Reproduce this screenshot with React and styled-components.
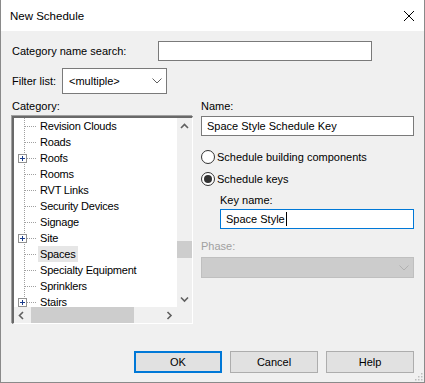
import React from 'react';
import styled, { createGlobalStyle } from 'styled-components';

const GlobalStyle = createGlobalStyle`
  html, body {
    margin: 0;
    padding: 0;
    background: #ffffff;
  }
  body {
    font-family: "Liberation Sans", Arial, sans-serif;
    font-size: 11px;
    color: #000;
  }
`;

const Window = styled.div`
  width: 425px;
  height: 383px;
  box-sizing: border-box;
  border: 1px solid #8a8a8a;
  border-top: none;
  background: #f0f0f0;
  display: flex;
  flex-direction: column;
  position: relative;
  overflow: hidden;
`;

const TitleBar = styled.div`
  height: 31px;
  background: #fff;
  display: flex;
  align-items: center;
  justify-content: space-between;
  padding: 0 9px 0 9px;
  font-size: 11.5px;
`;

const CloseIcon = styled.svg`
  width: 12px;
  height: 12px;
`;

const Body = styled.div`
  flex: 1;
  padding: 10px 10px 0 11px;
  display: flex;
  flex-direction: column;
`;

const Row = styled.div`
  display: flex;
  align-items: center;
  height: ${(p) => p.h}px;
  margin-bottom: ${(p) => p.mb || 0}px;
`;

const Label = styled.div`
  width: ${(p) => (p.w ? `${p.w}px` : 'auto')};
  color: ${(p) => (p.disabled ? '#a0a0a0' : '#000')};
  padding-left: ${(p) => p.indent || 0}px;
  height: 14px;
  line-height: 14px;
  margin-top: ${(p) => p.mt || 0}px;
  margin-bottom: ${(p) => p.mb || 0}px;
`;

const TextInput = styled.div`
  box-sizing: border-box;
  width: ${(p) => p.w}px;
  height: ${(p) => p.h || 20}px;
  background: #fff;
  border: 1px solid ${(p) => (p.focused ? '#0078d7' : '#7a7a7a')};
  padding: 0 5px;
  display: flex;
  align-items: center;
  margin-left: ${(p) => p.ml || 0}px;
  margin-top: ${(p) => p.mt || 0}px;
`;

const Caret = styled.span`
  display: inline-block;
  width: 1px;
  height: 14px;
  background: #000;
  margin-left: 1px;
`;

const Combo = styled.div`
  box-sizing: border-box;
  width: ${(p) => p.w}px;
  height: ${(p) => p.h}px;
  background: ${(p) => (p.disabled ? '#cccccc' : '#fff')};
  border: 1px solid ${(p) => (p.disabled ? '#bfbfbf' : '#7a7a7a')};
  display: flex;
  align-items: center;
  justify-content: space-between;
  padding: 0 4px 0 6px;
`;

const Chevron = ({ color = '#606060' }) => (
  <svg width="10" height="6" viewBox="0 0 10 6">
    <path d="M0.5 0.5 L5 5 L9.5 0.5" fill="none" stroke={color} strokeWidth="1" />
  </svg>
);

const Columns = styled.div`
  display: flex;
  gap: 8px;
  margin-top: 5px;
`;

const LeftCol = styled.div`
  width: 181px;
  display: flex;
  flex-direction: column;
`;

const RightCol = styled.div`
  width: 213px;
  display: flex;
  flex-direction: column;
`;

const TreeBox = styled.div`
  box-sizing: border-box;
  height: 208px;
  border-style: solid;
  border-width: 2px 1px 1px 2px;
  border-color: #696969 #fff #fff #696969;
  box-shadow: -1px -1px 0 #a0a0a0;
  background: #fff;
  display: grid;
  grid-template-columns: 1fr 15px;
  grid-template-rows: 1fr 16px;
  margin-top: 3px;
`;

const TreeList = styled.div`
  overflow: hidden;
  position: relative;
`;

const TreeRow = styled.div`
  height: 16px;
  display: flex;
  align-items: center;
  position: relative;
  letter-spacing: -0.2px;
`;

const Dots = styled.div`
  position: absolute;
  left: ${(p) => p.left}px;
  top: ${(p) => p.top}px;
  width: ${(p) => p.w || 1}px;
  height: ${(p) => p.h || 1}px;
  background-image: ${(p) =>
    p.vertical
      ? 'linear-gradient(to bottom, #a0a0a0 50%, transparent 50%)'
      : 'linear-gradient(to right, #a0a0a0 50%, transparent 50%)'};
  background-size: ${(p) => (p.vertical ? '1px 2px' : '2px 1px')};
`;

const Expander = styled.div`
  position: absolute;
  left: 4px;
  top: 4px;
  width: 9px;
  height: 9px;
  box-sizing: border-box;
  border: 1px solid #919191;
  background: #fff;
  display: flex;
  align-items: center;
  justify-content: center;
  z-index: 1;
`;

const ItemText = styled.span`
  margin-left: 24px;
  padding: 1px 2px;
  background: ${(p) => (p.selected ? '#e6e6e6' : 'transparent')};
  line-height: 14px;
  white-space: nowrap;
`;

const VScroll = styled.div`
  background: #f0f0f0;
  display: flex;
  flex-direction: column;
  align-items: center;
  position: relative;
`;

const HScroll = styled.div`
  background: #f0f0f0;
  display: flex;
  align-items: center;
  position: relative;
`;

const ScrollArrow = styled.div`
  width: 15px;
  height: 16px;
  display: flex;
  align-items: center;
  justify-content: center;
`;

const Spacer = styled.div`
  flex: 1;
`;

const VThumb = styled.div`
  position: absolute;
  left: 0;
  right: 0;
  top: ${(p) => p.top}px;
  height: ${(p) => p.h}px;
  background: #cdcdcd;
`;

const HThumb = styled.div`
  position: absolute;
  top: 0;
  bottom: 0;
  left: ${(p) => p.left}px;
  width: ${(p) => p.w}px;
  background: #cdcdcd;
`;

const Corner = styled.div`
  background: #f0f0f0;
`;

const RadioRow = styled.div`
  display: flex;
  align-items: center;
  height: 16px;
  margin-top: ${(p) => p.mt || 0}px;
  margin-bottom: ${(p) => p.mb || 0}px;
`;

const RadioCircle = styled.div`
  box-sizing: border-box;
  width: 14px;
  height: 14px;
  border-radius: 50%;
  border: 1px solid #333;
  background: #fff;
  display: flex;
  align-items: center;
  justify-content: center;
  margin-right: 2px;
`;

const RadioDot = styled.div`
  width: 8px;
  height: 8px;
  border-radius: 50%;
  background: #333;
`;

const Footer = styled.div`
  display: flex;
  justify-content: flex-end;
  gap: 8px;
  margin-top: auto;
  padding: 0 0 9px 0;
`;

const Button = styled.div`
  box-sizing: border-box;
  width: 88px;
  height: 22px;
  background: #e1e1e1;
  border: ${(p) => (p.primary ? '2px solid #0078d7' : '1px solid #adadad')};
  display: flex;
  align-items: center;
  justify-content: center;
`;

const Grip = styled.svg`
  position: absolute;
  right: 1px;
  bottom: 1px;
`;

const items = [
  { name: 'Revision Clouds' },
  { name: 'Roads' },
  { name: 'Roofs', plus: true },
  { name: 'Rooms' },
  { name: 'RVT Links' },
  { name: 'Security Devices' },
  { name: 'Signage' },
  { name: 'Site', plus: true },
  { name: 'Spaces', selected: true },
  { name: 'Specialty Equipment' },
  { name: 'Sprinklers' },
  { name: 'Stairs', plus: true },
];

const Plus = () => (
  <svg width="7" height="7" viewBox="0 0 7 7">
    <path d="M1 3.5 H6 M3.5 1 V6" stroke="#1a3c8c" strokeWidth="1" shapeRendering="crispEdges" />
  </svg>
);

const Arrow = ({ dir }) => {
  const paths = {
    up: 'M1 5 L4.5 1.5 L8 5',
    down: 'M1 1.5 L4.5 5 L8 1.5',
    left: 'M5 1 L1.5 4.5 L5 8',
    right: 'M1.5 1 L5 4.5 L1.5 8',
  };
  const vertical = dir === 'up' || dir === 'down';
  return (
    <svg width={vertical ? 9 : 7} height={vertical ? 7 : 9} viewBox={vertical ? '0 0 9 7' : '0 0 7 9'}>
      <path d={paths[dir]} fill="none" stroke="#606060" strokeWidth="1.6" />
    </svg>
  );
};

export default function App() {
  return (
    <>
      <GlobalStyle />
      <Window>
        <TitleBar>
          <span>New Schedule</span>
          <CloseIcon viewBox="0 0 12 12">
            <path d="M1 1 L11 11 M11 1 L1 11" stroke="#000" strokeWidth="1" />
          </CloseIcon>
        </TitleBar>
        <Body>
          <Row h={20} mb={7}>
            <Label w={146}>Category name search:</Label>
            <TextInput w={214} />
          </Row>
          <Row h={26}>
            <Label w={50}>Filter list:</Label>
            <Combo w={105} h={26}>
              <span>&lt;multiple&gt;</span>
              <Chevron />
            </Combo>
          </Row>
          <Columns>
            <LeftCol>
              <Label>Category:</Label>
              <TreeBox>
                <TreeList>
                  <Dots vertical left={10} top={0} h={200} />
                  {items.map((it) => (
                    <TreeRow key={it.name}>
                      <Dots left={11} top={8} w={12} />
                      {it.plus && (
                        <Expander>
                          <Plus />
                        </Expander>
                      )}
                      <ItemText selected={it.selected}>{it.name}</ItemText>
                    </TreeRow>
                  ))}
                </TreeList>
                <VScroll>
                  <ScrollArrow>
                    <Arrow dir="up" />
                  </ScrollArrow>
                  <VThumb top={123} h={17} />
                  <Spacer />
                  <ScrollArrow>
                    <Arrow dir="down" />
                  </ScrollArrow>
                </VScroll>
                <HScroll>
                  <ScrollArrow>
                    <Arrow dir="left" />
                  </ScrollArrow>
                  <HThumb left={17} w={103} />
                  <Spacer />
                  <ScrollArrow>
                    <Arrow dir="right" />
                  </ScrollArrow>
                </HScroll>
                <Corner />
              </TreeBox>
            </LeftCol>
            <RightCol>
              <Label>Name:</Label>
              <TextInput w={213} h={20} mt={3}>
                Space Style Schedule Key
              </TextInput>
              <RadioRow mt={13} mb={6}>
                <RadioCircle />
                Schedule building components
              </RadioRow>
              <RadioRow mb={6}>
                <RadioCircle>
                  <RadioDot />
                </RadioCircle>
                Schedule keys
              </RadioRow>
              <Label indent={19} mb={2}>Key name:</Label>
              <TextInput w={194} h={20} ml={19} focused>
                Space Style
                <Caret />
              </TextInput>
              <Label disabled mt={10} mb={4}>
                Phase:
              </Label>
              <Combo w={213} h={21} disabled>
                <span />
                <Chevron color="#b0b0b0" />
              </Combo>
            </RightCol>
          </Columns>
          <Footer>
            <Button primary>OK</Button>
            <Button>Cancel</Button>
            <Button>Help</Button>
          </Footer>
        </Body>
        <Grip width="8" height="8" viewBox="0 0 8 8">
          <rect x="6" y="0" width="1.5" height="1.5" fill="#bdbdbd" />
          <rect x="3" y="3" width="1.5" height="1.5" fill="#bdbdbd" />
          <rect x="6" y="3" width="1.5" height="1.5" fill="#bdbdbd" />
          <rect x="0" y="6" width="1.5" height="1.5" fill="#bdbdbd" />
          <rect x="3" y="6" width="1.5" height="1.5" fill="#bdbdbd" />
          <rect x="6" y="6" width="1.5" height="1.5" fill="#bdbdbd" />
        </Grip>
      </Window>
    </>
  );
}
